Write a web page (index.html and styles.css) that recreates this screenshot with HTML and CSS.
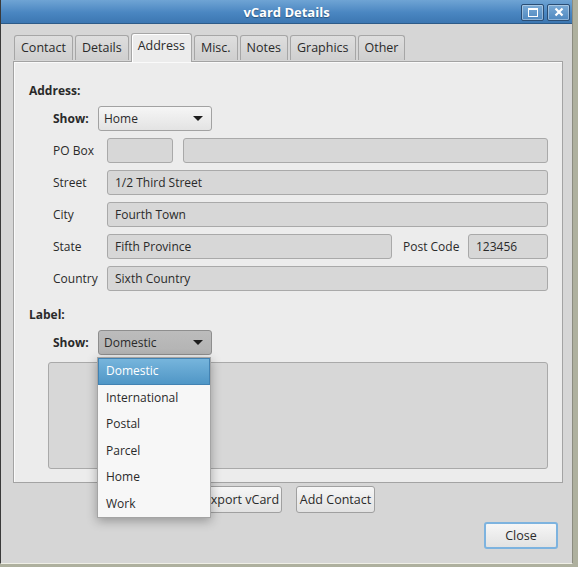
FILE: index.html
```html
<!DOCTYPE html>
<html lang="en">
<head>
  <meta charset="UTF-8">
  <title>vCard Details</title>
  <link rel="stylesheet" href="styles.css">
</head>
<body>
  <div class="window">
    <div class="titlebar">
      <span></span>
      <span class="title">vCard Details</span>
      <div class="wm-buttons">
        <span class="wm-btn"><span class="max-glyph"></span></span>
        <span class="wm-btn">
          <svg width="10" height="10" viewBox="0 0 10 10"><path d="M1.5 1.5 L8.5 8.5 M8.5 1.5 L1.5 8.5" stroke="#fff" stroke-width="2.2"/></svg>
        </span>
      </div>
    </div>

    <div class="dialog">
      <div class="tabs">
        <div class="tab">Contact</div>
        <div class="tab">Details</div>
        <div class="tab active">Address</div>
        <div class="tab">Misc.</div>
        <div class="tab">Notes</div>
        <div class="tab">Graphics</div>
        <div class="tab">Other</div>
      </div>

      <div class="panel">
        <div class="heading">Address:</div>
        <div class="show-row">
          <span class="show-label">Show:</span>
          <div class="combo"><span>Home</span><span class="arrow"></span></div>
        </div>

        <div class="fields">
          <label>PO Box</label>
          <div class="line">
            <div class="entry po-small"></div>
            <div class="entry grow"></div>
          </div>
          <label>Street</label>
          <div class="line"><div class="entry grow">1/2 Third Street</div></div>
          <label>City</label>
          <div class="line"><div class="entry grow">Fourth Town</div></div>
          <label>State</label>
          <div class="line">
            <div class="entry grow">Fifth Province</div>
            <span class="post-label">Post Code</span>
            <div class="entry post">123456</div>
          </div>
          <label>Country</label>
          <div class="line"><div class="entry grow">Sixth Country</div></div>
        </div>

        <div class="heading second">Label:</div>
        <div class="show-row">
          <span class="show-label">Show:</span>
          <div class="combo-wrap">
            <div class="combo pressed"><span>Domestic</span><span class="arrow"></span></div>
            <div class="popup">
              <div class="item selected">Domestic</div>
              <div class="item">International</div>
              <div class="item">Postal</div>
              <div class="item">Parcel</div>
              <div class="item">Home</div>
              <div class="item">Work</div>
            </div>
          </div>
        </div>
        <div class="textarea"></div>
      </div>

      <div class="actions">
        <button class="btn export">Export vCard</button>
        <button class="btn add">Add Contact</button>
      </div>
      <div class="footer">
        <button class="btn close">Close</button>
      </div>
    </div>
  </div>
</body>
</html>
```

FILE: styles.css
```css
body {
  margin: 0;
  background: #aeb09e;
  font-family: "Open Sans", "Noto Sans", sans-serif;
  font-size: 12px;
  color: #2a2a2a;
}
.window {
  width: 573px;
  height: 564px;
  box-sizing: border-box;
  border-left: 1px solid #3a3a3a;
  border-right: 1px solid #8c8c80;
  border-bottom: 1px solid #efefe6;
  background: #d6d6d6;
  display: flex;
  flex-direction: column;
}
.titlebar {
  flex-shrink: 0;
  height: 23px;
  border-bottom: 1px solid #2d5b88;
  background: linear-gradient(#6fa4d4, #4a86c1 55%, #3c77b2);
  display: grid;
  grid-template-columns: 1fr auto 1fr;
  align-items: center;
}
.title {
  color: #fff;
  font-weight: bold;
  font-size: 13px;
  text-shadow: 0 1px 1px rgba(0,0,0,0.35);
}
.wm-buttons {
  display: flex;
  justify-content: flex-end;
  gap: 3px;
  padding-right: 2px;
  padding-top: 1px;
}
.wm-btn {
  width: 21px;
  height: 15px;
  border: 1px solid #2a4d74;
  border-radius: 2px;
  background: linear-gradient(#7aaad6, #4f88bf);
  box-shadow: inset 0 0 0 1px rgba(255,255,255,0.35);
  display: flex;
  align-items: center;
  justify-content: center;
}
.max-glyph {
  width: 8px;
  height: 6px;
  border: 1px solid #fff;
  border-top-width: 2px;
}
.dialog {
  flex: 1;
  display: flex;
  flex-direction: column;
  padding: 10px 0 0 12px;
}
.tabs {
  flex-shrink: 0;
  display: flex;
  gap: 2px;
  padding-left: 1px;
  align-items: flex-end;
  height: 27px;
  position: relative;
  z-index: 1;
}
.tab {
  height: 24px;
  padding: 0 6px;
  line-height: 24px;
  font-size: 12.5px;
  border: 1px solid #a6a6a6;
  border-bottom: none;
  border-radius: 3px 3px 0 0;
  background: linear-gradient(#dedede, #cfcfcf);
  margin-bottom: 1px;
}
.tab.active {
  height: 27px;
  line-height: 24px;
  background: #ececec;
  margin-bottom: -1px;
  padding-bottom: 1px;
  box-shadow: inset 1px 1px #fff;
}
.panel {
  flex-shrink: 0;
  width: 550px;
  height: 422px;
  box-sizing: border-box;
  border: 1px solid #a3a3a3;
  background: #ececec;
  box-shadow: inset 1px 1px #fafafa;
  padding: 20px 0 0 15px;
}
.heading {
  font-weight: bold;
  height: 18px;
  line-height: 18px;
}
.heading.second {
  margin-top: 15px;
}
.show-row {
  display: flex;
  align-items: center;
  margin-top: 6px;
  padding-left: 24px;
}
.show-label {
  font-weight: bold;
  width: 45px;
}
.combo-wrap {
  position: relative;
}
.combo {
  width: 99px;
  height: 23px;
  padding: 0 8px 0 5px;
  border: 1px solid #a2a2a2;
  border-radius: 3px;
  background: linear-gradient(#f6f6f6, #e3e3e3);
  display: flex;
  align-items: center;
  justify-content: space-between;
}
.combo.pressed {
  background: linear-gradient(#bcbcbc, #b3b3b3);
  border-color: #8e8e8e;
}
.arrow {
  width: 0;
  height: 0;
  border-left: 5px solid transparent;
  border-right: 5px solid transparent;
  border-top: 5px solid #1e1e1e;
}
.fields {
  display: grid;
  grid-template-columns: 54px 441px;
  row-gap: 7px;
  margin-top: 7px;
  padding-left: 24px;
  align-items: center;
}
.line {
  display: flex;
  align-items: center;
  gap: 10px;
}
.entry {
  height: 23px;
  line-height: 23px;
  padding: 0 7px;
  border: 1px solid #a9a9a9;
  border-radius: 3px;
  background: #d7d7d7;
}
.entry.grow {
  flex: 1;
}
.entry.po-small {
  width: 50px;
}
.entry.post {
  width: 64px;
}
.post-label {
  padding-left: 1px;
  width: 55px;
  white-space: nowrap;
}
.textarea {
  margin: 7px 0 0 19px;
  width: 498px;
  height: 105px;
  border: 1px solid #a9a9a9;
  border-radius: 3px;
  background: #d7d7d7;
}
.popup {
  position: absolute;
  left: -1px;
  top: 27px;
  width: 112px;
  border: 1px solid #a4a4a4;
  background: #f7f7f7;
  box-shadow: 0 3px 10px rgba(0,0,0,0.3);
  z-index: 5;
}
.item {
  height: 26.5px;
  line-height: 26.5px;
  padding-left: 8px;
}
.item.selected {
  color: #fff;
  background: linear-gradient(#78b6dd, #4e95c5);
  box-shadow: inset 0 0 0 1px #4282b2;
}
.actions {
  display: flex;
  gap: 14px;
  margin-top: 3px;
  padding-left: 188px;
}
.btn {
  font-family: inherit;
  font-size: 12.5px;
  color: #2a2a2a;
  height: 27px;
  padding: 0;
  border: 1px solid #a0a0a0;
  border-radius: 3px;
  background: linear-gradient(#f6f6f6, #e2e2e2);
}
.btn.export {
  width: 81px;
}
.btn.add {
  width: 79px;
}
.footer {
  display: flex;
  justify-content: flex-end;
  margin-top: 9px;
  padding-right: 14px;
}
.btn.close {
  width: 74px;
  border: 2px solid #7db3df;
}
```
